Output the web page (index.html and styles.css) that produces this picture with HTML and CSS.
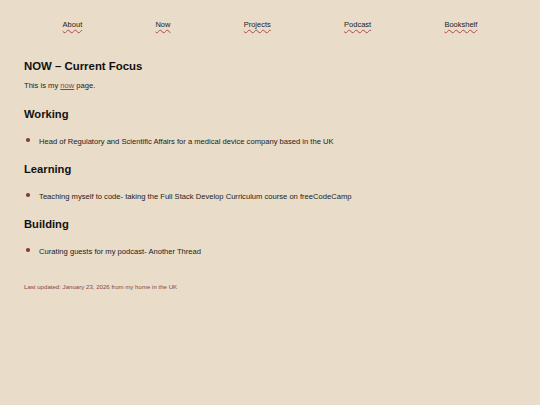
FILE: index.html
```html
<!DOCTYPE html>
<html lang="en">
<head>
<meta charset="utf-8">
<title>Now</title>
<link rel="stylesheet" href="styles.css">
</head>
<body>
<nav class="nav">
  <a href="#">About</a>
  <a href="#">Now</a>
  <a href="#">Projects</a>
  <a href="#">Podcast</a>
  <a href="#">Bookshelf</a>
</nav>
<main class="main">
  <h1 class="title">NOW – Current Focus</h1>
  <p class="intro">This is my <a class="link" href="#">now</a> page.</p>

  <h2 class="section">Working</h2>
  <ul class="list">
    <li>Head of Regulatory and Scientific Affairs for a medical device company based in the UK</li>
  </ul>

  <h2 class="section">Learning</h2>
  <ul class="list">
    <li>Teaching myself to code- taking the Full Stack Develop Curriculum course on freeCodeCamp</li>
  </ul>

  <h2 class="section">Building</h2>
  <ul class="list">
    <li>Curating guests for my podcast- Another Thread</li>
  </ul>

  <p class="updated">Last updated: January 23, 2026 from my home in the UK</p>
</main>
</body>
</html>
```
FILE: styles.css
```css
html, body {
  margin: 0;
  padding: 0;
  background: #e9dcc8;
}
body {
  padding: 0 24px;
  font-family: "Liberation Sans", Arial, sans-serif;
  color: #222;
  font-size: 7.6px;
}
.nav {
  display: flex;
  justify-content: space-around;
  padding: 20px 2px 0;
  line-height: 10px;
  font-size: 7.5px;
}
.nav a {
  color: #222;
  text-decoration: underline wavy #b04a4a;
  text-decoration-thickness: 0.6px;
  text-underline-offset: 2px;
}
.main {
  display: block;
}
.title {
  margin: 29px 0 0;
  font-size: 11.4px;
  line-height: 14px;
  font-weight: bold;
  color: #111;
}
.intro {
  margin: 8px 0 0;
  line-height: 10px;
}
.link {
  color: #8b4545;
  text-decoration: underline;
}
.section {
  margin: 16px 0 0;
  font-size: 11.2px;
  line-height: 14px;
  font-weight: bold;
  color: #111;
}
.section + .list {
  margin: 16px 0 0;
}
.list + .section {
  margin-top: 15px;
}
.list {
  list-style: none;
  padding: 0;
  line-height: 10px;
}
.list li {
  display: flex;
  align-items: flex-start;
}
.list li::before {
  content: "";
  flex: none;
  width: 3.6px;
  height: 3.6px;
  border-radius: 50%;
  background: #8b3a3a;
  margin: 1px 9.5px 0 2px;
}
.updated {
  margin: 26px 0 0;
  font-size: 6.1px;
  line-height: 8px;
  color: #8b4545;
}
```
